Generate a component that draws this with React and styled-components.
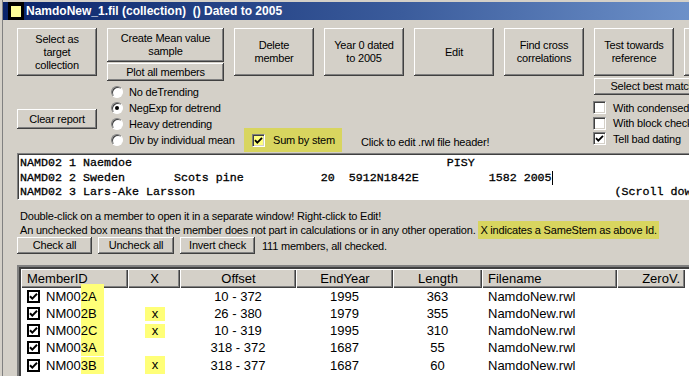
import React from 'react';
import styled, { createGlobalStyle, css } from 'styled-components';

const GlobalStyle = createGlobalStyle`
  html, body {
    margin: 0;
    padding: 0;
    background: #D4D0C8;
    overflow: hidden;
  }
  body {
    font-family: "Liberation Sans", Arial, sans-serif;
    font-size: 11px;
    letter-spacing: -0.2px;
    color: #000;
  }
`;

const pad = (s, n) => s.padEnd(n, ' ');
const headerLines = [
  pad('NAMD02 1 Naemdoe', 61) + 'PISY',
  pad(pad(pad(pad('NAMD02 2 Sweden', 22) + 'Scots pine', 43) + '20', 47) + '5912N1842E', 67) + '1582 2005',
  pad('NAMD02 3 Lars-Ake Larsson', 85) + '(Scroll down for more)',
];

const members = [
  { base: 'NM00', tail: '2A', x: false, offset: '10 - 372', end: 1995, len: 363 },
  { base: 'NM00', tail: '2B', x: true, offset: '26 - 380', end: 1979, len: 355 },
  { base: 'NM00', tail: '2C', x: true, offset: '10 - 319', end: 1995, len: 310 },
  { base: 'NM00', tail: '3A', x: false, offset: '318 - 372', end: 1687, len: 55 },
  { base: 'NM00', tail: '3B', x: true, offset: '318 - 377', end: 1687, len: 60 },
];

const radios = ['No deTrending', 'NegExp for detrend', 'Heavy detrending', 'Div by individual mean'];

function Check({ size = 9, weight = 1.8 }) {
  return (
    <svg width={size} height={size} viewBox="0 0 9 9">
      <polyline points="1,4.2 3.3,6.6 8,1.8" fill="none" stroke="#000" strokeWidth={weight} />
    </svg>
  );
}

export default function App() {
  return (
    <>
      <GlobalStyle />
      <Window>
        <TitleBar>
          <AppIcon><span /></AppIcon>
          <Title>NamdoNew_1.fil (collection)&nbsp; () Dated to 2005</Title>
        </TitleBar>
        <Body>
          <TopArea>
            <Column $w={80}>
              <Btn>Select as<br />target<br />collection</Btn>
              <Btn $h={20} style={{ marginTop: 33 }}>Clear report</Btn>
            </Column>
            <Column $w={117}>
              <Btn $w={117} $h={34}>Create Mean value<br />sample</Btn>
              <Btn $w={117} $h={18} style={{ marginTop: 1 }}>Plot all members</Btn>
              <RadioGroup>
                {radios.map((r, i) => (
                  <RadioRow key={r}>
                    <RadioDot $on={i === 1} />
                    {r}
                  </RadioRow>
                ))}
              </RadioGroup>
            </Column>
            <RestColumn>
              <ButtonRow>
                <Btn>Delete<br />member</Btn>
                <Btn>Year 0 dated<br />to 2005</Btn>
                <Btn>Edit</Btn>
                <Btn>Find cross<br />correlations</Btn>
              </ButtonRow>
              <SumRow>
                <SumMark>
                  <Box $bg="#FFFF80"><Check /></Box>
                  Sum by stem
                </SumMark>
                <HeaderHint>Click to edit .rwl file header!</HeaderHint>
              </SumRow>
            </RestColumn>
            <Column $w={80}>
              <Btn>Test towards<br />reference</Btn>
              <Btn $w={117} $h={17} style={{ marginTop: 2 }}>Select best match</Btn>
              <CheckList>
                <CheckRow><Box />With condensed</CheckRow>
                <CheckRow><Box />With block check</CheckRow>
                <CheckRow><Box><Check /></Box>Tell bad dating</CheckRow>
              </CheckList>
            </Column>
            <Column $w={80}>
              <Btn aria-label="more" />
            </Column>
          </TopArea>

          <HeaderEdit>
            {headerLines.map((l, i) => (
              <MonoLine key={i}>
                {l}
                {i === 1 && <Caret />}
              </MonoLine>
            ))}
          </HeaderEdit>

          <Info>
            <div>Double-click on a member to open it in a separate window! Right-click to Edit!</div>
            <div>
              An unchecked box means that the member does not part in calculations or in any other operation.{' '}
              <Mark>X indicates a SameStem as above Id.</Mark>
            </div>
          </Info>

          <ActionRow>
            <Btn $w={75} $h={17}>Check all</Btn>
            <Btn $w={76} $h={17}>Uncheck all</Btn>
            <Btn $w={75} $h={17}>Invert check</Btn>
            <Count>111 members, all checked.</Count>
          </ActionRow>

          <ListFrame>
            <ListInner>
              <ListHeader>
                <HeadCell $align="left">MemberID</HeadCell>
                <HeadCell>X</HeadCell>
                <HeadCell>Offset</HeadCell>
                <HeadCell>EndYear</HeadCell>
                <HeadCell>Length</HeadCell>
                <HeadCell $align="left">Filename</HeadCell>
                <HeadCell $align="right">ZeroV.</HeadCell>
              </ListHeader>
              {members.map((m, i) => (
                <ListRow key={m.tail}>
                  <IdCell>
                    <FlatBox><Check size={9} weight={2} /></FlatBox>
                    <span>
                      {m.base}
                      <IdTail $first={i === 0}>{m.tail}</IdTail>
                    </span>
                  </IdCell>
                  <Cell>{m.x && <XMark $tall={i === 4}>x</XMark>}</Cell>
                  <Cell>{m.offset}</Cell>
                  <Cell>{m.end}</Cell>
                  <Cell>{m.len}</Cell>
                  <Cell $align="left">NamdoNew.rwl</Cell>
                  <Cell />
                </ListRow>
              ))}
            </ListInner>
          </ListFrame>
        </Body>
      </Window>
    </>
  );
}

const Window = styled.div`
  width: 780px;
  height: 376px;
  box-sizing: border-box;
  margin-left: 2px;
  padding-top: 2px;
  border-left: 1px solid #808080;
`;

const TitleBar = styled.div`
  height: 18px;
  display: flex;
  align-items: center;
  gap: 2px;
  background: linear-gradient(90deg, #0A246A 0px, #3B5C9C 400px, #6F93CB 700px, #A6CAF0 780px);
`;

const AppIcon = styled.div`
  width: 16px;
  height: 18px;
  margin-left: 5px;
  background: #000;
  display: flex;
  align-items: center;
  justify-content: center;
  span {
    width: 10px;
    height: 11px;
    background: #FFFF99;
  }
`;

const Title = styled.div`
  color: #fff;
  font-weight: bold;
  font-size: 12px;
  letter-spacing: 0;
  white-space: nowrap;
`;

const Body = styled.div`
  padding: 8px 0 0 14px;
`;

const TopArea = styled.div`
  display: flex;
  gap: 10px;
  height: 124px;
`;

const Column = styled.div`
  width: ${(p) => p.$w}px;
  flex: none;
  display: flex;
  flex-direction: column;
`;

const RestColumn = styled.div`
  width: 350px;
  flex: none;
  display: flex;
  flex-direction: column;
  justify-content: space-between;
`;

const ButtonRow = styled.div`
  display: flex;
  gap: 10px;
`;

const Btn = styled.button`
  box-sizing: border-box;
  width: ${(p) => p.$w || 80}px;
  height: ${(p) => p.$h || 48}px;
  flex: none;
  margin: 0;
  padding: 0 2px;
  border: none;
  background: #D4D0C8;
  box-shadow: inset -1px -1px #404040, inset 1px 1px #fff, inset -2px -2px #808080;
  font: inherit;
  letter-spacing: inherit;
  line-height: 13px;
  color: #000;
  text-align: center;
  white-space: nowrap;
`;

const RadioGroup = styled.div`
  margin-top: 3px;
  padding-left: 4px;
  display: flex;
  flex-direction: column;
`;

const RadioRow = styled.div`
  height: 16px;
  display: flex;
  align-items: center;
  gap: 6px;
  white-space: nowrap;
`;

const RadioDot = styled.span`
  width: 12px;
  height: 12px;
  box-sizing: border-box;
  flex: none;
  border-radius: 50%;
  background: #fff;
  border: 1px solid;
  border-color: #808080 #fff #fff #808080;
  box-shadow: inset 1px 1px #404040;
  display: flex;
  align-items: center;
  justify-content: center;
  ${(p) => p.$on && css`
    &::after {
      content: '';
      width: 4px;
      height: 4px;
      border-radius: 50%;
      background: #000;
    }
  `}
`;

const SumRow = styled.div`
  height: 24px;
  display: flex;
  align-items: stretch;
`;

const SumMark = styled.div`
  margin-left: 10px;
  width: 98px;
  box-sizing: border-box;
  padding-left: 8px;
  background: #D8D55F;
  display: flex;
  align-items: center;
  gap: 8px;
`;

const HeaderHint = styled.div`
  margin-left: 19px;
  padding-top: 3px;
  display: flex;
  align-items: center;
  white-space: nowrap;
`;

const CheckList = styled.div`
  margin-top: 5px;
  margin-left: -1px;
  display: flex;
  flex-direction: column;
`;

const CheckRow = styled.div`
  height: 15.5px;
  display: flex;
  align-items: center;
  gap: 7px;
  white-space: nowrap;
`;

const Box = styled.span`
  width: 13px;
  height: 13px;
  box-sizing: border-box;
  flex: none;
  background: ${(p) => p.$bg || '#fff'};
  border: 1px solid;
  border-color: #808080 #fff #fff #808080;
  box-shadow: inset 1px 1px #404040, inset -1px -1px #D4D0C8;
  display: flex;
  align-items: center;
  justify-content: center;
`;

const HeaderEdit = styled.div`
  margin-top: 1px;
  height: 47px;
  box-sizing: border-box;
  background: #fff;
  border: 1px solid;
  border-color: #808080 #fff #fff #808080;
  box-shadow: inset 1px 1px #404040;
  padding: 2px 0 0 2px;
  font-family: "Liberation Mono", "Courier New", monospace;
  font-size: 11.667px;
  letter-spacing: 0;
  -webkit-text-stroke: 0.3px #000;
  overflow: hidden;
`;

const MonoLine = styled.div`
  height: 14.5px;
  line-height: 14.5px;
  white-space: pre;
`;

const Caret = styled.span`
  display: inline-block;
  width: 1px;
  height: 14px;
  background: #000;
  vertical-align: top;
`;

const Info = styled.div`
  margin-top: 9px;
  padding-left: 3px;
  line-height: 14px;
  white-space: nowrap;
`;

const Mark = styled.span`
  background: #D8D55F;
  padding: 3px 2px;
`;

const ActionRow = styled.div`
  display: flex;
  align-items: center;
  gap: 6px;
`;

const Count = styled.span`
  margin-left: 1px;
  white-space: nowrap;
`;

const ListFrame = styled.div`
  margin-top: 11px;
  border: 2px solid;
  border-color: #808080 #fff #fff #808080;
`;

const ListInner = styled.div`
  border: 2px solid;
  border-color: #404040 #D4D0C8 #D4D0C8 #404040;
  background: #fff;
  font-size: 13px;
  letter-spacing: 0;
  height: 120px;
`;

const columns = '107px 52px 116px 97px 89px 135px 68px';

const ListHeader = styled.div`
  display: grid;
  grid-template-columns: ${columns};
  height: 19px;
`;

const HeadCell = styled.div`
  background: #D4D0C8;
  box-shadow: inset 1px 1px #fff, inset -1px -1px #404040, inset -2px -2px #808080;
  display: flex;
  align-items: center;
  justify-content: ${(p) => (p.$align === 'left' ? 'flex-start' : p.$align === 'right' ? 'flex-end' : 'center')};
  padding: 0 5px 0 6px;
  white-space: nowrap;
`;

const ListRow = styled.div`
  display: grid;
  grid-template-columns: ${columns};
  height: 17px;
  line-height: 17px;
`;

const Cell = styled.div`
  display: flex;
  align-items: center;
  justify-content: ${(p) => (p.$align === 'left' ? 'flex-start' : 'center')};
  padding-left: ${(p) => (p.$align === 'left' ? '6px' : '0')};
  white-space: nowrap;
`;

const IdCell = styled.div`
  display: flex;
  align-items: center;
  gap: 6px;
  padding-left: 6px;
  white-space: nowrap;
`;

const FlatBox = styled.span`
  width: 13px;
  height: 13px;
  box-sizing: border-box;
  flex: none;
  border: 2px solid #000;
  background: #fff;
  display: flex;
  align-items: center;
  justify-content: center;
`;

const IdTail = styled.span`
  display: inline-block;
  height: 17px;
  padding-right: 7px;
  background: #FFFF78;
  ${(p) => p.$first && css`box-shadow: 0 -4px 0 #FFFF78;`}
`;

const XMark = styled.span`
  display: inline-block;
  width: 20px;
  height: ${(p) => (p.$tall ? 18 : 14)}px;
  line-height: ${(p) => (p.$tall ? 18 : 14)}px;
  margin-left: 2px;
  text-align: center;
  background: #FFFF78;
`;
